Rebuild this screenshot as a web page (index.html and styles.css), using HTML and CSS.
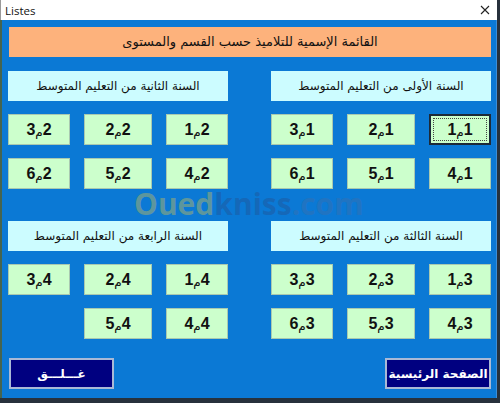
FILE: index.html
```html
<!DOCTYPE html>
<html lang="ar">
<head>
<meta charset="utf-8">
<title>Listes</title>
<link rel="stylesheet" href="styles.css">
</head>
<body>
<div class="window">
  <div class="titlebar">
    <span class="title">Listes</span>
    <svg class="close-x" width="10" height="10" viewBox="0 0 10 10"><path d="M1 1L9 9M9 1L1 9" stroke="#222" stroke-width="1.1" fill="none"/></svg>
  </div>
  <div class="panel">
    <div class="header" dir="rtl">القائمة الإسمية للتلاميذ حسب القسم والمستوى</div>
    <div class="sections" dir="rtl">
      <div class="section">
        <div class="section-title">السنة الأولى من التعليم المتوسط</div>
        <div class="btns">
          <div class="btn focused">1<span class="m">م</span>1</div>
          <div class="btn">1<span class="m">م</span>2</div>
          <div class="btn">1<span class="m">م</span>3</div>
          <div class="btn">1<span class="m">م</span>4</div>
          <div class="btn">1<span class="m">م</span>5</div>
          <div class="btn">1<span class="m">م</span>6</div>
        </div>
      </div>
      <div class="section">
        <div class="section-title">السنة الثانية من التعليم المتوسط</div>
        <div class="btns">
          <div class="btn">2<span class="m">م</span>1</div>
          <div class="btn">2<span class="m">م</span>2</div>
          <div class="btn">2<span class="m">م</span>3</div>
          <div class="btn">2<span class="m">م</span>4</div>
          <div class="btn">2<span class="m">م</span>5</div>
          <div class="btn">2<span class="m">م</span>6</div>
        </div>
      </div>
      <div class="section">
        <div class="section-title">السنة الثالثة من التعليم المتوسط</div>
        <div class="btns">
          <div class="btn">3<span class="m">م</span>1</div>
          <div class="btn">3<span class="m">م</span>2</div>
          <div class="btn">3<span class="m">م</span>3</div>
          <div class="btn">3<span class="m">م</span>4</div>
          <div class="btn">3<span class="m">م</span>5</div>
          <div class="btn">3<span class="m">م</span>6</div>
        </div>
      </div>
      <div class="section">
        <div class="section-title">السنة الرابعة من التعليم المتوسط</div>
        <div class="btns">
          <div class="btn">4<span class="m">م</span>1</div>
          <div class="btn">4<span class="m">م</span>2</div>
          <div class="btn">4<span class="m">م</span>3</div>
          <div class="btn">4<span class="m">م</span>4</div>
          <div class="btn">4<span class="m">م</span>5</div>
        </div>
      </div>
    </div>
    <div class="footer" dir="rtl">
      <div class="navy-btn home">الصفحة الرئيسية</div>
      <div class="navy-btn close">غـــلـــق</div>
    </div>
    <div class="watermark"><span class="wm-oued">Oued</span><span class="wm-kniss">kniss</span><span class="wm-com">.com</span></div>
  </div>
</div>
</body>
</html>
```
FILE: styles.css
```css
html, body {
  margin: 0;
  padding: 0;
}
body {
  width: 500px;
  height: 403px;
  overflow: hidden;
  background: #27313c;
}
.window {
  width: 497px;
  display: flex;
  flex-direction: column;
}
.titlebar {
  height: 20px;
  background: #ffffff;
  border-left: 1px solid #9a9a9a;
  box-sizing: border-box;
  display: flex;
  align-items: center;
  justify-content: space-between;
  padding: 0 7px 0 4px;
}
.title {
  font-family: "Open Sans", "Noto Sans", sans-serif;
  font-size: 11.5px;
  color: #111;
}
.close-x {
  display: block;
}
.panel {
  position: relative;
  height: 378px;
  box-sizing: border-box;
  background: #0b79d5;
  border-left: 2px solid #46644e;
  border-right: 1px solid #3d8ed8;
  padding: 7px 5px 0 6px;
}
.header {
  height: 30px;
  margin-left: 1px;
  background: #fdb27c;
  text-align: center;
  line-height: 30px;
  font-family: "DejaVu Sans", sans-serif;
  font-size: 13px;
  color: #111;
}
.sections {
  display: grid;
  grid-template-columns: 220px 220px;
  column-gap: 43px;
  row-gap: 32px;
  margin-top: 14px;
}
.section-title {
  height: 30px;
  background: #ccfcff;
  text-align: center;
  line-height: 30px;
  font-family: "DejaVu Sans", sans-serif;
  font-size: 12px;
  color: #111;
  margin-bottom: 13px;
}
.btns {
  display: grid;
  grid-template-columns: 62px 68px 62px;
  grid-auto-rows: 31px;
  column-gap: 14px;
  row-gap: 13px;
}
.btn {
  box-sizing: border-box;
  background: #ccffcc;
  border: 1px solid #a9c9b0;
  display: flex;
  align-items: center;
  justify-content: center;
  font-family: "Liberation Sans", "DejaVu Sans", sans-serif;
  font-weight: bold;
  font-size: 16px;
  color: #111;
}
.m {
  font-family: "DejaVu Sans", sans-serif;
  font-weight: normal;
  font-size: 12px;
  position: relative;
  top: 2px;
}
.btn.focused {
  border: 2px solid #1d2a38;
  outline: 1px dotted #444;
  outline-offset: -5px;
}
.footer {
  display: flex;
  justify-content: space-between;
  margin-top: 19px;
}
.navy-btn {
  box-sizing: border-box;
  height: 31px;
  background: #000080;
  border: 2px solid #a9b9d6;
  color: #ffffff;
  display: flex;
  align-items: center;
  justify-content: center;
  font-family: "DejaVu Sans", sans-serif;
  font-weight: bold;
  font-size: 12px;
  white-space: nowrap;
}
.home {
  width: 106px;
}
.close {
  width: 105px;
  margin-left: 1px;
}
.watermark {
  position: absolute;
  left: 132px;
  top: 172px;
  font-family: "Open Sans", "DejaVu Sans", sans-serif;
  font-weight: bold;
  font-size: 30px;
  line-height: 24px;
  pointer-events: none;
}
.wm-oued {
  color: rgba(150, 170, 120, 0.6);
}
.wm-kniss {
  color: rgba(30, 90, 160, 0.55);
}
.wm-com {
  color: rgba(60, 110, 170, 0.45);
}
```
